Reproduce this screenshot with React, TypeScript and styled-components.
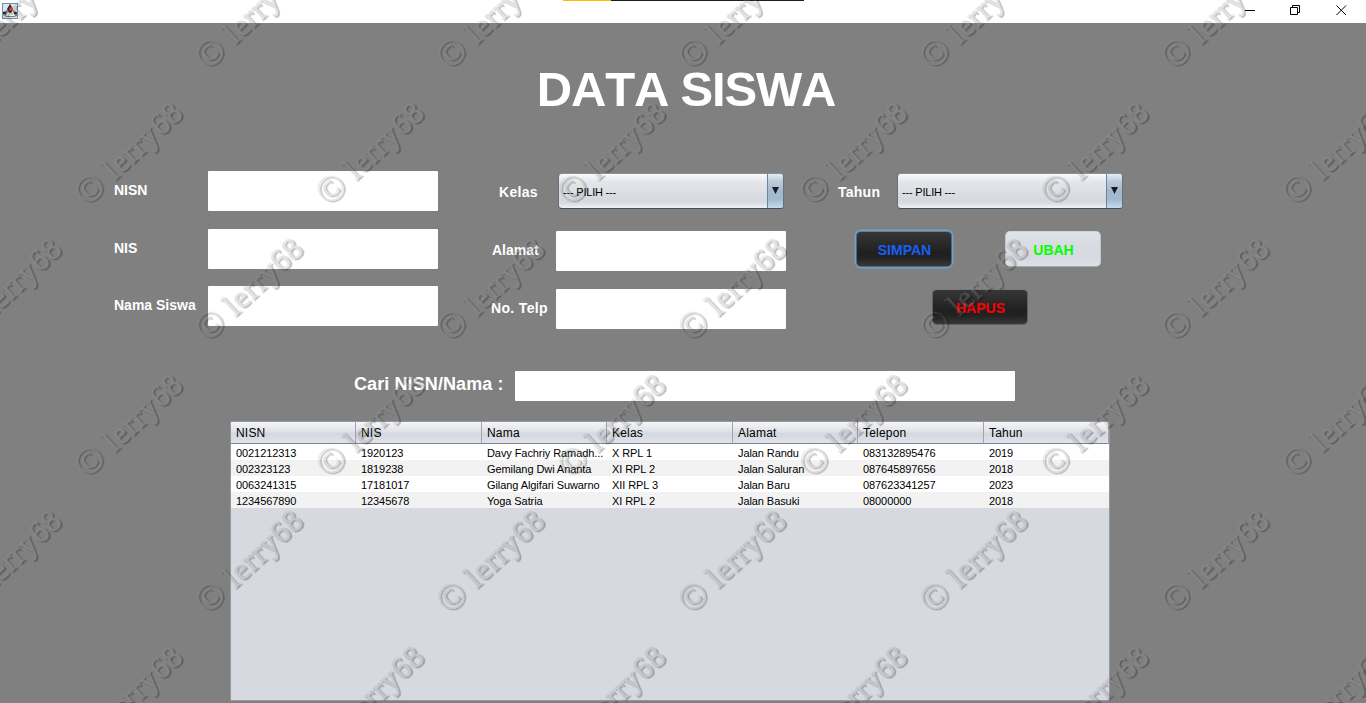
import React from "react";
import styled, { createGlobalStyle } from "styled-components";

const GlobalStyle = createGlobalStyle`
  * { box-sizing: border-box; }
  html, body { margin: 0; padding: 0; }
  body { background: #808080; overflow: hidden; font-family: "Liberation Sans", Arial, sans-serif; }
`;

const Window = styled.div`
  position: relative;
  width: 1366px;
  height: 703px;
  overflow: hidden;
  background: #808080;
  display: flex;
  flex-direction: column;
`;

const TitleBar = styled.header`
  height: 23px;
  flex: none;
  background: #fff;
  display: flex;
  justify-content: space-between;
  padding: 0 19px 0 2px;
`;

const AppIcon = styled.svg`
  width: 16px;
  height: 16px;
  margin-top: 3px;
`;

const TabStrip = styled.div`
  display: flex;
  width: 241px;
  height: 1px;
  margin-left: 545px;
  margin-right: auto;
`;

const TabPart = styled.div<{ $color: string; $width: number }>`
  width: ${(p) => p.$width}px;
  background: ${(p) => p.$color};
`;

const WindowControls = styled.div`
  display: flex;
  gap: 35px;
  padding-top: 5px;
`;

const ControlIcon = styled.svg`
  width: 11px;
  height: 11px;
  fill: none;
  stroke: #000;
  stroke-width: 1;
`;

const Title = styled.h1`
  margin: 38px 0 0 6px;
  height: 56px;
  line-height: 56px;
  font-size: 49px;
  font-weight: bold;
  font-kerning: none;
  letter-spacing: -1.2px;
  color: #fff;
  text-align: center;
  white-space: nowrap;
`;

const Form = styled.div`
  display: flex;
  height: 163px;
  margin: 53px 0 0 114px;
`;

const Column = styled.div<{ $width: number; $top?: number; $gap: number }>`
  width: ${(p) => p.$width}px;
  padding-top: ${(p) => p.$top ?? 0}px;
  display: flex;
  flex-direction: column;
  gap: ${(p) => p.$gap}px;
`;

const Field = styled.div<{ $inset?: number }>`
  display: flex;
  padding-left: ${(p) => p.$inset ?? 0}px;
`;

const Label = styled.label<{ $width: number; $spacing?: number }>`
  width: ${(p) => p.$width}px;
  flex: none;
  height: 40px;
  line-height: 38px;
  color: #fff;
  font-size: 14px;
  font-weight: bold;
  letter-spacing: ${(p) => p.$spacing ?? 0}px;
  white-space: nowrap;
`;

const Input = styled.input<{ $width?: number; $height?: number }>`
  width: ${(p) => p.$width ?? 230}px;
  height: ${(p) => p.$height ?? 40}px;
  flex: none;
  padding: 0 6px;
  border: 0;
  border-radius: 1px;
  background: #fff;
  outline: none;
`;

const Combo = styled.div`
  display: flex;
  width: 226px;
  height: 36px;
  flex: none;
  border: 1px solid #66717d;
  border-top-color: #8b9097;
  border-bottom-color: #3c5062;
  border-radius: 4px;
  overflow: hidden;
  background: linear-gradient(#fafafc 0%, #e3e5ea 25%, #d6d9df 75%, #d8dbe2 85%, #eff3fa 100%);
`;

const ComboText = styled.span`
  flex: 1;
  padding-left: 4px;
  line-height: 37px;
  font-size: 11px;
  letter-spacing: -0.2px;
  color: #000;
`;

const ComboArrow = styled.span`
  width: 16px;
  display: flex;
  padding: 13px 0 0 4px;
  border-left: 1px solid #6886a0;
  background: linear-gradient(#e2ecf3 0%, #bccbd9 22%, #a3b8cc 52%, #a4bacf 75%, #c2dcf0 100%);
`;

const Buttons = styled.div`
  display: grid;
  grid-template-columns: 96px 96px;
  column-gap: 53px;
  row-gap: 22px;
  padding-left: 18px;
`;

const Button = styled.button<{ $color: string; $dark?: boolean; $focused?: boolean }>`
  display: block;
  width: 96px;
  height: 36px;
  margin: 0;
  padding: 2px 0 0 1px;
  border: 1px solid ${(p) => (p.$dark ? "#5f6266" : "#c2c5cb")};
  border-top-color: ${(p) => (p.$dark ? "#76787c" : "#d0d3d8")};
  border-bottom-color: ${(p) => (p.$dark ? "#5b6270" : "#a5a8b0")};
  border-radius: 5px;
  background: ${(p) =>
    p.$dark
      ? "linear-gradient(#373737 0%, #2b2b2b 30%, #202020 60%, #222 75%, #383838 100%)"
      : "linear-gradient(#e0e3e8 0%, #d9dce2 35%, #d6d9df 75%, #dde0e7 100%)"};
  box-shadow: ${(p) => (p.$focused ? "0 0 0 1.5px #6f9fce" : "none")};
  font: bold 14px "Liberation Sans", Arial, sans-serif;
  color: ${(p) => p.$color};
`;

const DeleteSlot = styled.div`
  grid-column: 1 / -1;
  padding-left: 76px;
`;

const Search = styled.div`
  display: flex;
  margin: 38px 0 0 354px;
`;

const SearchLabel = styled.label`
  width: 161px;
  line-height: 26px;
  font-size: 18px;
  font-weight: bold;
  letter-spacing: 0.1px;
  color: #fff;
`;

const TablePane = styled.div`
  width: 880px;
  height: 280px;
  flex: none;
  margin: 20px 0 0 230px;
  border: 1px solid #9297a1;
  background: #d6d9df;
`;

const Table = styled.table`
  width: 878px;
  table-layout: fixed;
  border-collapse: separate;
  border-spacing: 0;
  color: #000;
`;

const HeadCell = styled.th`
  height: 22px;
  padding: 0 0 0 5px;
  border-right: 1px solid #a0a4ad;
  border-bottom: 1px solid #7d828e;
  background: linear-gradient(#f5f6f8 0%, #e0e2e7 45%, #d5d8de 55%, #dfe2e8 100%);
  text-align: left;
  font-size: 12px;
  font-weight: normal;
  line-height: 20px;
  letter-spacing: 0.2px;
`;

const BodyRow = styled.tr`
  background: #fff;
  &:nth-child(even) { background: #f2f2f2; }
`;

const Cell = styled.td`
  height: 16px;
  padding: 2px 0 0 5px;
  font-size: 11px;
  line-height: 14px;
  letter-spacing: -0.08px;
  white-space: nowrap;
`;

const Watermark = styled.svg`
  position: absolute;
  inset: 0;
  pointer-events: none;
  font-family: "Liberation Serif", "Times New Roman", serif;
`;

const columns = ["NISN", "NIS", "Nama", "Kelas", "Alamat", "Telepon", "Tahun"];
const widths = [125, 126, 125, 126, 125, 126, 125];
const students = [
  ["0021212313", "1920123", "Davy Fachriy Ramadh...", "X RPL 1", "Jalan Randu", "083132895476", "2019"],
  ["002323123", "1819238", "Gemilang Dwi Ananta", "XI RPL 2", "Jalan Saluran", "087645897656", "2018"],
  ["0063241315", "17181017", "Gilang Algifari Suwarno", "XII RPL 3", "Jalan Baru", "087623341257", "2023"],
  ["1234567890", "12345678", "Yoga Satria", "XI RPL 2", "Jalan Basuki", "08000000", "2018"],
];

const marks: { x: number; y: number }[] = [];
for (let row = 0; row < 6; row++) {
  for (let col = -1; col < 6; col++) {
    marks.push({ x: (row % 2 ? 90.5 : 211) + col * 241.5, y: 53.5 + row * 136 });
  }
}

function Select() {
  return (
    <Combo>
      <ComboText>--- PILIH ---</ComboText>
      <ComboArrow>
        <svg width="8" height="7" viewBox="0 0 8 7"><path d="M0 0H7L3.5 7Z" fill="#171c22" /></svg>
      </ComboArrow>
    </Combo>
  );
}

export default function App() {
  return (
    <Window>
      <GlobalStyle />
      <TitleBar>
        <AppIcon viewBox="0 0 16 16">
          <rect x=".5" y=".5" width="15" height="15" fill="#dce5ec" stroke="#6d8fa9" />
          <path d="M1 9l4-2 2 2h3l2-2 3 3v3l-3 1H4l-3-2z" fill="#777c80" />
          <path d="M6 9h5l2 4H4z" fill="#f5f5f5" />
          <path d="M8 1l3 5-2 4H7L5 6z" fill="#252525" />
          <circle cx="9" cy="6" r="2" fill="#e5302c" />
          <path d="M1 9h3v2H1zM12 9h3v2h-3z" fill="#24282b" />
        </AppIcon>
        <TabStrip>
          <TabPart $width={48} $color="#ffb900" />
          <TabPart $width={193} $color="#1d1d1d" />
        </TabStrip>
        <WindowControls>
          <ControlIcon viewBox="0 0 11 11"><path d="M1 5.5H11" /></ControlIcon>
          <ControlIcon viewBox="0 0 11 11"><path d="M.5 2.5H7.5V9.5H.5ZM2.5 2V.5H9.5V7.5H8" /></ControlIcon>
          <ControlIcon viewBox="0 0 11 11"><path d="M.5 .5L10 10M10 .5L.5 10" /></ControlIcon>
        </WindowControls>
      </TitleBar>
      <Title>DATA SISWA</Title>
      <Form>
        <Column $width={377} $top={1} $gap={17.5}>
          <Field><Label $width={94}>NISN</Label><Input /></Field>
          <Field><Label $width={94}>NIS</Label><Input /></Field>
          <Field><Label $width={94}>Nama Siswa</Label><Input /></Field>
        </Column>
        <Column $width={347} $top={3} $gap={18}>
          <Field $inset={8}><Label $width={59} $spacing={0.3}>Kelas</Label><Select /></Field>
          <Field $inset={1}><Label $width={64}>Alamat</Label><Input /></Field>
          <Field><Label $width={65} $spacing={0.35}>No. Telp</Label><Input /></Field>
        </Column>
        <Column $width={300} $top={3} $gap={18}>
          <Field><Label $width={59} $spacing={0.25}>Tahun</Label><Select /></Field>
          <Buttons>
            <Button $dark $focused $color="#1760f5">SIMPAN</Button>
            <Button $color="#00ff00">UBAH</Button>
            <DeleteSlot><Button $dark $color="#ff0000">HAPUS</Button></DeleteSlot>
          </Buttons>
        </Column>
      </Form>
      <Search>
        <SearchLabel>Cari NISN/Nama :</SearchLabel>
        <Input $width={500} $height={30} />
      </Search>
      <TablePane>
        <Table>
          <colgroup>{widths.map((w, i) => <col key={i} width={w} />)}</colgroup>
          <thead><tr>{columns.map((c) => <HeadCell key={c}>{c}</HeadCell>)}</tr></thead>
          <tbody>
            {students.map((s) => (
              <BodyRow key={s[0]}>{s.map((v, i) => <Cell key={i}>{v}</Cell>)}</BodyRow>
            ))}
          </tbody>
        </Table>
      </TablePane>
      <Watermark width="1366" height="703" viewBox="0 0 1366 703">
        <defs>
          <filter id="emboss" x="0" y="0" width="1366" height="703" filterUnits="userSpaceOnUse" colorInterpolationFilters="sRGB">
            <feGaussianBlur in="SourceAlpha" stdDeviation="0.5" result="glyph" />
            <feOffset in="glyph" dx="-2.5" dy="-1" result="raised" />
            <feComposite in="glyph" in2="raised" operator="out" result="edge" />
            <feFlood floodColor="#000" floodOpacity="0.27" />
            <feComposite in2="edge" operator="in" result="shade" />
            <feFlood floodColor="#949494" floodOpacity="0.26" />
            <feComposite in2="raised" operator="in" result="face" />
            <feMerge><feMergeNode in="face" /><feMergeNode in="shade" /></feMerge>
          </filter>
        </defs>
        <g filter="url(#emboss)" fontSize="31" stroke="#000" strokeWidth="0.7">
          {marks.map((m, i) => (
            <text key={i} transform={`translate(${m.x} ${m.y}) rotate(-43)`} x="-13.5" y="12.5">
              <tspan fontSize="37" strokeWidth="0.2">©</tspan>
              <tspan x="24" y="11.5" letterSpacing="1.1">lerry68</tspan>
            </text>
          ))}
        </g>
      </Watermark>
    </Window>
  );
}
